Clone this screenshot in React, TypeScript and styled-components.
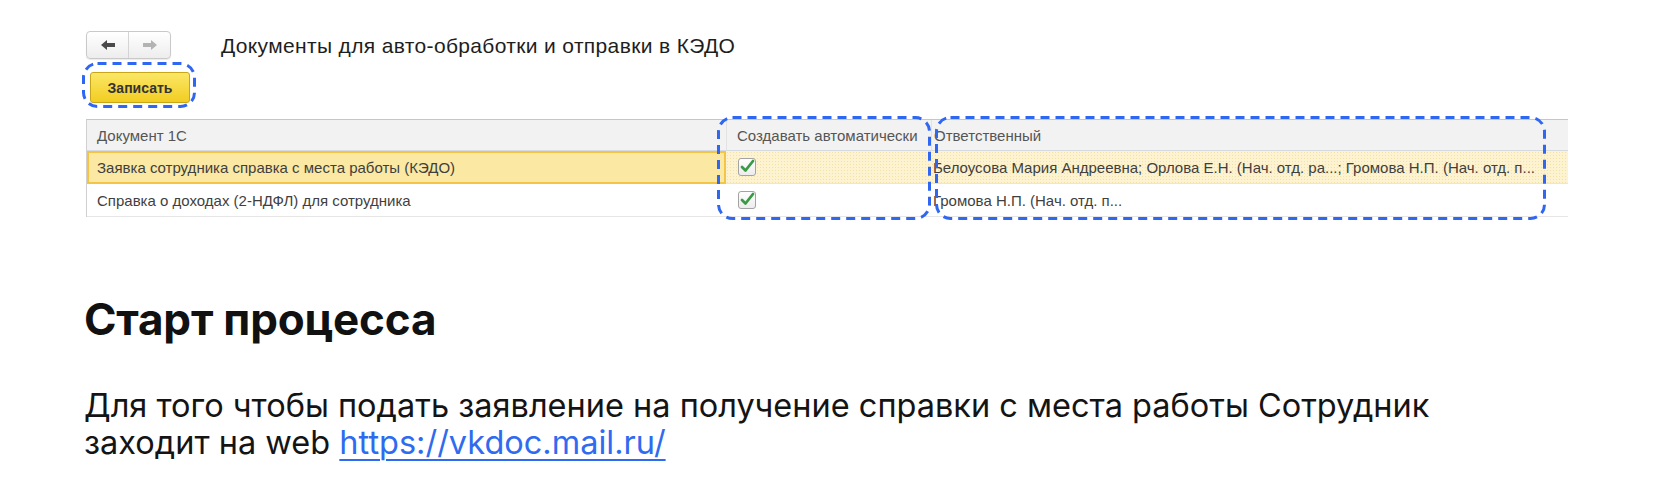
import React from "react";
import styled, { createGlobalStyle } from "styled-components";

const GlobalStyle = createGlobalStyle`
  html, body {
    margin: 0;
    padding: 0;
    background: #ffffff;
  }
  body {
    font-family: Inter, "Noto Sans", Arial, sans-serif;
  }
`;

const Page = styled.div`
  width: 1653px;
  height: 493px;
  box-sizing: border-box;
  padding: 31px 0 0 84px;
  overflow: hidden;
`;

const Screenshot = styled.div`
  position: relative;
  width: 1482px;
  margin-left: 2px;
  font-family: Arial, "Liberation Sans", sans-serif;
`;

const TopBar = styled.div`
  display: flex;
  align-items: center;
  height: 28px;
`;

const NavGroup = styled.div`
  display: flex;
  width: 85px;
  height: 28px;
  box-sizing: border-box;
  border: 1px solid #c9c9c9;
  border-radius: 4px;
  background: linear-gradient(#ffffff, #ededed);
  box-shadow: 0 1px 1px rgba(0, 0, 0, 0.08);
`;

const NavButton = styled.div<{ $last?: boolean }>`
  flex: 1;
  display: flex;
  align-items: center;
  justify-content: center;
  border-left: ${(p) => (p.$last ? "1px solid #d4d4d4" : "none")};
`;

const Title = styled.div`
  margin: 2px 0 0 50px;
  font-size: 21px;
  letter-spacing: 0.35px;
  color: #1e1e1e;
`;

const SaveButton = styled.button`
  display: flex;
  align-items: center;
  justify-content: center;
  margin: 13px 0 0 4px;
  width: 100px;
  height: 31px;
  box-sizing: border-box;
  border: 1px solid #c9a618;
  border-radius: 3px;
  background: linear-gradient(#fbe766, #f2cd22);
  font-family: Arial, "Liberation Sans", sans-serif;
  font-size: 14px;
  font-weight: bold;
  color: #333;
  padding: 0;
`;

const Table = styled.div`
  margin-top: 16px;
  display: grid;
  grid-template-columns: 639px 205px 1fr;
  border-top: 1px solid #c6c6c6;
  border-left: 1px solid #d0d0d0;
  font-size: 15px;
  color: #3f3f3f;
`;

const HeadCell = styled.div<{ $sep?: boolean; $tight?: boolean }>`
  height: 30px;
  display: flex;
  align-items: center;
  padding-left: ${(p) => (p.$tight ? "2px" : "10px")};
  background: #f2f2f2;
  border-bottom: 1px solid #d5d9e2;
  border-left: ${(p) => (p.$sep ? "1px solid #e2e2e2" : "none")};
  color: #555;
  white-space: nowrap;
  overflow: hidden;
`;

const Cell = styled.div<{ $selected?: boolean; $current?: boolean }>`
  height: 33px;
  display: flex;
  align-items: center;
  box-sizing: border-box;
  white-space: nowrap;
  overflow: hidden;
  background-color: ${(p) =>
    p.$selected ? "#fbe8a2" : p.$current ? "#fdf3d0" : "#ffffff"};
  background-image: ${(p) =>
    p.$current && !p.$selected
      ? "radial-gradient(#f3e2a8 0.7px, transparent 0.7px)"
      : "none"};
  background-size: 3px 3px;
  border: ${(p) => (p.$selected ? "2px solid #f3c445" : "none")};
  border-bottom: ${(p) => (p.$selected ? "2px solid #f3c445" : "1px solid #e6e6e6")};
  padding-left: ${(p) => (p.$selected ? "8px" : "10px")};
`;

const CheckCell = styled(Cell)`
  padding-left: 12px;
`;

const NameCell = styled(Cell)`
  padding-left: 2px;
`;

const Frame = styled.svg`
  position: absolute;
  overflow: visible;
  pointer-events: none;
`;

const Article = styled.div`
  margin-top: 76px;
  color: #111;
`;

const Heading = styled.h2`
  margin: 0;
  font-family: Inter, "Noto Sans", sans-serif;
  font-size: 44px;
  font-weight: 700;
  line-height: 52px;
  letter-spacing: -0.2px;
`;

const Paragraph = styled.p`
  margin: 42px 0 0;
  width: 1440px;
  font-family: Inter, "Noto Sans", sans-serif;
  font-size: 32.5px;
  line-height: 37px;
  color: #141414;
`;

const Link = styled.a`
  color: #2f6bf0;
  text-decoration: underline;
  text-decoration-thickness: 2px;
  text-underline-offset: 5px;
`;

const Arrow = ({ dir, color }: { dir: "left" | "right"; color: string }) => (
  <svg width="16" height="12" viewBox="0 0 16 12">
    <g transform={dir === "right" ? "scale(-1,1) translate(-16,0)" : undefined}>
      <path d="M1 6 L7 1 L7 4 L15 4 L15 8 L7 8 L7 11 Z" fill={color} />
    </g>
  </svg>
);

const CheckBox = () => (
  <svg width="18" height="18" viewBox="0 0 18 18">
    <defs>
      <linearGradient id="cb" x1="0" y1="0" x2="0" y2="1">
        <stop offset="0" stopColor="#ffffff" />
        <stop offset="1" stopColor="#ececec" />
      </linearGradient>
    </defs>
    <rect x="0.5" y="0.5" width="17" height="17" rx="2.5" fill="url(#cb)" stroke="#a3a3a3" />
    <path d="M4 9 L7.5 12.5 L15 3" fill="none" stroke="#3a9a45" strokeWidth="2.8" strokeLinecap="round" strokeLinejoin="round" />
  </svg>
);

const DashedFrame = ({ x, y, w, h }: { x: number; y: number; w: number; h: number }) => (
  <Frame style={{ left: x, top: y }} width={w} height={h}>
    <rect
      x="1.5"
      y="1.5"
      width={w - 3}
      height={h - 3}
      rx="14"
      fill="none"
      stroke="#2f66f2"
      strokeWidth="3"
      strokeDasharray="9 6"
    />
  </Frame>
);

const rows = [
  {
    doc: "Заявка сотрудника справка с места работы (КЭДО)",
    who: "Белоусова Мария Андреевна; Орлова Е.Н. (Нач. отд. ра...; Громова Н.П. (Нач. отд. п...",
    current: true,
  },
  {
    doc: "Справка о доходах (2-НДФЛ) для сотрудника",
    who: "Громова Н.П. (Нач. отд. п...",
    current: false,
  },
];

export default function App() {
  return (
    <Page>
      <GlobalStyle />
      <Screenshot>
        <TopBar>
          <NavGroup>
            <NavButton>
              <Arrow dir="left" color="#4a4a4a" />
            </NavButton>
            <NavButton $last>
              <Arrow dir="right" color="#b3b3b3" />
            </NavButton>
          </NavGroup>
          <Title>Документы для авто-обработки и отправки в КЭДО</Title>
        </TopBar>
        <SaveButton>Записать</SaveButton>
        <Table>
          <HeadCell>Документ 1С</HeadCell>
          <HeadCell $sep>Создавать автоматически</HeadCell>
          <HeadCell $sep $tight>
            Ответственный
          </HeadCell>
          {rows.map((r) => (
            <React.Fragment key={r.doc}>
              <Cell $current={r.current} $selected={r.current}>
                {r.doc}
              </Cell>
              <CheckCell $current={r.current}>
                <CheckBox />
              </CheckCell>
              <NameCell $current={r.current}>{r.who}</NameCell>
            </React.Fragment>
          ))}
        </Table>
        <DashedFrame x={-4} y={31} w={114} h={46} />
        <DashedFrame x={631} y={85} w={214} h={104} />
        <DashedFrame x={849} y={85} w={611} h={104} />
      </Screenshot>
      <Article>
        <Heading>Старт процесса</Heading>
        <Paragraph>
          Для того чтобы подать заявление на получение справки с места работы Сотрудник заходит на
          web <Link href="#">https://vkdoc.mail.ru/</Link>
        </Paragraph>
      </Article>
    </Page>
  );
}
